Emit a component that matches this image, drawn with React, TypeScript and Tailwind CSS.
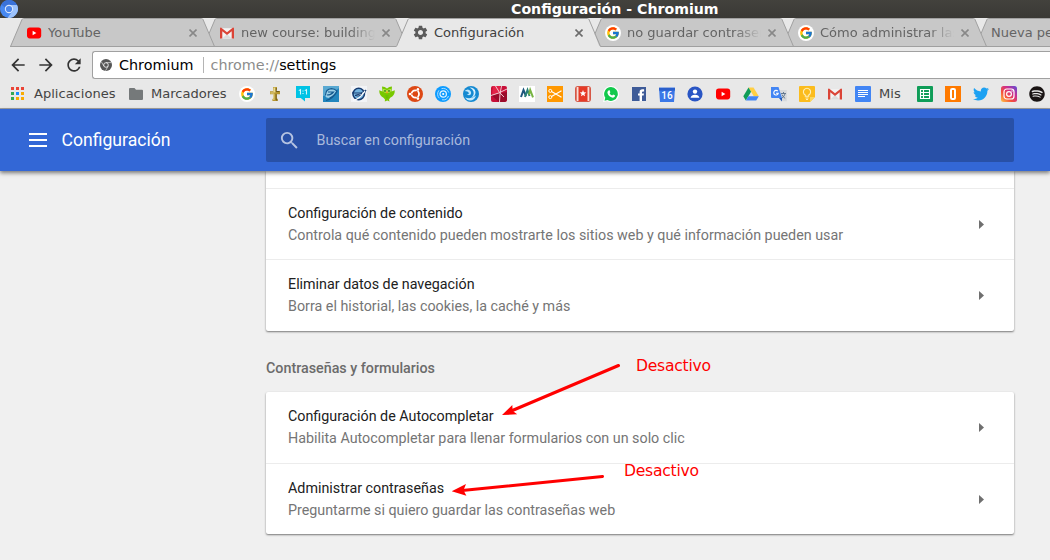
import React from "react";
import { FcGoogle } from "react-icons/fc";
import { FaTwitter, FaSpotify } from "react-icons/fa";
import { MdSettings, MdSearch, MdRefresh, MdArrowBack, MdArrowForward } from "react-icons/md";

type Children = { children: React.ReactNode };

function Glyph({ children }: Children) {
  return (
    <svg viewBox="0 0 16 16" className="block size-4 shrink-0">
      {children}
    </svg>
  );
}

function Google() {
  return (
    <span className="flex size-4 shrink-0 items-center justify-center rounded-full bg-white">
      <FcGoogle className="size-[14px]" />
    </span>
  );
}

function YouTube() {
  return (
    <Glyph>
      <rect x="1" y="2.6" width="14.2" height="10.8" rx="2.8" fill="#f00" />
      <path d="M6.6 5.8v4.4L10.4 8z" fill="#fff" />
    </Glyph>
  );
}

function Gmail() {
  return (
    <Glyph>
      <path d="M2 3.2h12v10.4H2z" fill="#f3f3f3" />
      <path d="M3.4 13.6 8 9l4.6 4.6z" fill="#dcdcdc" />
      <path d="M1 3.4v10.2h2.3V6.3L8 10l4.7-3.7v7.3H15V3.4q0-1-1-1L8 7.2 2 2.4q-1 0-1 1z" fill="#db4437" />
    </Glyph>
  );
}

function BlueBall({ className }: { className: string }) {
  return (
    <svg viewBox="0 0 18 18" className={className}>
      <circle cx="9" cy="9" r="9" fill="#4688f1" />
      <path d="M9 5h8a9 9 0 0 1-9.5 12.9L12.5 11z" fill="#9cc2fb" />
      <path d="M1.2 4.5A9 9 0 0 1 17 5H9a4 4 0 0 0-3.800 2.800z" fill="#3a72d8" />
      <circle cx="9" cy="9" r="4.2" fill="#d8e6fc" />
      <circle cx="9" cy="9" r="3.1" fill="#4c86ea" />
    </svg>
  );
}

const bookmarks: React.ReactNode[] = [
  <Google />,
  <Glyph>
    <path d="M6 1h4v2l-.7 2H13v3.300H9.800V12l1 1.300V15H5.400v-1.700l1-1.300V8.300H3V5.200h3.600L6 3z" fill="#b5952f" />
    <path d="M6.400 1.600h2V6.400h-5v1.200h4V14h-1V8" fill="#eadb91" />
    <path d="M9.200 2v3.500h3.200M9.200 8.200V14h1.300" fill="none" stroke="#5e4b13" strokeWidth=".8" />
  </Glyph>,
  <Glyph>
    <path d="M1 0h14v12H10v3.400L5.800 12H1z" fill="#00c3e5" />
    <path d="M3.800 4.600 5.500 3.600v4.800M9.800 4.600l1.700-1v4.800M8 4.600v1M8 7v1" fill="none" stroke="#d4f7fc" strokeWidth="1.100" />
  </Glyph>,
  <Glyph>
    <rect width="16" height="16" fill="#5aa9d2" />
    <path d="M0 10q8-1 16-8v14H0z" fill="#2386bd" />
    <path d="M2 8.500Q2.500 3 8.500 2.500q3.500 0 5 2l-3 5-4 2.500q-4.500 0-4.500-3.500z" fill="#9cd0e8" />
    <path d="M2.500 9.500Q2.500 3 8.500 2.600q3 0 5.500 2.400-2 4.500-7.500 7M4 9q4 0 6.500-3H5M3 14.500q7-1.500 11-9" fill="none" stroke="#145b91" strokeWidth="1.200" />
  </Glyph>,
  <Glyph>
    <rect width="16" height="16" fill="#f2f4f7" />
    <circle cx="7.700" cy="8" r="5.700" fill="#73b3df" stroke="#163b70" strokeWidth="1.600" />
    <path d="M1 7h9l5-3q-1 5-8 6l-3-.6 7-2" fill="#d8edf8" stroke="#163b70" />
    <path d="M2 14.500Q9 13 14 5" fill="none" stroke="#f8fafc" strokeWidth="1.300" />
  </Glyph>,
  <Glyph>
    <path d="M3 .5q3 .2 5 2 2-1.800 5-2l-.5 5 3.300-1.300q.2 5-4.600 7.600L10 13.500l.5 2-2.200-1-2.500 1 .2-2-1.500-1.700Q.2 9.500.2 4.200l3.300 1.300z" fill="#78c800" />
    <path d="M4 3q2.800-.3 4 1.500Q9.200 2.700 12 3q.3 3.600-2.500 3.800H6.500Q3.700 6.600 4 3z" fill="#b5ea48" />
    <circle cx="6" cy="4.900" r=".9" fill="#397b12" />
    <circle cx="10" cy="4.900" r=".9" fill="#397b12" />
    <path d="m6.800 6.100 1.200-.8 1.200.8L8 7.700z" fill="#f59b22" />
    <path d="M6.500 10h3M7 11.800h2.500" stroke="#5fae0c" strokeWidth=".8" />
  </Glyph>,
  <Glyph>
    <circle cx="8" cy="8" r="8" fill="#dd4814" />
    <circle cx="8.300" cy="8" r="3.700" fill="none" stroke="#fff" strokeWidth="1.800" />
    <path d="M8.300 8H1M8.300 8l3.500-6M8.300 8l3.500 6" stroke="#dd4814" />
    <circle cx="3" cy="8" r="1.300" fill="#fff" />
    <circle cx="10.900" cy="3.400" r="1.300" fill="#fff" />
    <circle cx="10.900" cy="12.600" r="1.300" fill="#fff" />
  </Glyph>,
  <Glyph>
    <circle cx="8" cy="8" r="8" fill="#0c9bff" />
    <path d="M4.300 12.200A5.800 5.800 0 0 1 4 4.300M6.500 2.600A5.800 5.800 0 0 1 13.700 6.500M13.500 10A5.800 5.800 0 0 1 7 13.800" fill="none" stroke="#a9dcff" />
    <circle cx="8.200" cy="8" r="3.200" fill="none" stroke="#e2f4ff" strokeWidth="1.200" />
    <circle cx="8.200" cy="8" r="1.100" fill="#fff" />
  </Glyph>,
  <Glyph>
    <circle cx="8" cy="8" r="8" fill="#1489d1" />
    <path d="M1.500 5Q5 2 7.500 5q1.500 2.500-.5 4-2.500.5-3.300-1 2.300.5 2.300-1Q5 5 1.500 5z" fill="#bfe6fb" />
    <path d="M6.500 1.500q5.500 0 6 4.500.2 4.500-4.500 6 3.500-3 2.500-6.500-.8-2.700-4-4z" fill="#d9f1ff" />
    <path d="M2 11.500q6.500 2 11-2-1.500 5-6 5-3.500-.5-5-3z" fill="#c6e9fc" />
  </Glyph>,
  <Glyph>
    <rect width="16" height="16" rx="2" fill="#c70f38" />
    <path d="M0 9 16 6v8l-2 2H8z" fill="#9a0c2b" />
    <path d="M2 0h7l1 7-9 2z" fill="#e22347" />
    <path d="M4.500 0Q8 7 13 11M0 9.500q8-2 16-6.500M10.500 0Q8.500 8 8.500 16" fill="none" stroke="#f2c9d0" />
  </Glyph>,
  <Glyph>
    <rect width="16" height="16" fill="#fff" />
    <path d="m2 11 2.500-7L7 10" fill="none" stroke="#1c557c" strokeWidth="2" />
    <path d="m6 11 2.500-7 2 6" fill="none" stroke="#287f76" strokeWidth="2" />
    <path d="m10 8.500 1.200-4.500 2.800 7.400" fill="none" stroke="#78b443" strokeWidth="2" />
  </Glyph>,
  <Glyph>
    <rect width="16" height="16" fill="#ff9800" />
    <path d="m4.500 5.500 10 5.800M4.500 10.500l10-5.800" stroke="#fff" strokeWidth="1.200" />
    <circle cx="3.300" cy="4.900" r="1.500" fill="none" stroke="#fff" />
    <circle cx="3.300" cy="11.100" r="1.500" fill="none" stroke="#fff" />
  </Glyph>,
  <Glyph>
    <rect width="16" height="16" rx="3" fill="#d65746" />
    <path d="M1.700 1h12.600v14H1.700z" fill="#f8ddd6" />
    <path d="M3.500 1h9v14h-9z" fill="#e63a27" />
    <path d="m8 4 .9 2.300 2.400.1-1.900 1.500.7 2.400L8 9l-2.100 1.300.7-2.400-1.900-1.500 2.400-.1z" fill="#fff" />
  </Glyph>,
  <Glyph>
    <path d="M8 0a8 8 0 1 1-3.800 15L0 16l1.100-4A8 8 0 0 1 8 0z" fill="#fff" />
    <path d="M8 1.100A6.900 6.900 0 1 1 4.500 14l-3 .8.800-3A6.900 6.900 0 0 1 8 1.100z" fill="#12c94c" />
    <path d="M5.500 4.400 6.400 4l1 2.200-.8 1q.8 1.600 2.600 2.400l.9-1 2.100 1q-.3 2.200-2.400 2.100-4.600-1-5.400-5-.1-1.500 1.100-2.300z" fill="#fff" />
  </Glyph>,
  <Glyph>
    <rect x="1" y="1" width="14" height="14" fill="#3e5b98" />
    <path d="M8.600 15V9.600H7V7.400h1.600V6q0-2.800 2.800-2.800h1.700v2.200H12q-1 0-1 .9v1.100h2l-.4 2.200H11V15z" fill="#fff" />
  </Glyph>,
  <span className="relative block size-4">
    <Glyph>
      <path d="M0 2h16l-1 14H1z" fill="#3b78e7" />
      <path d="M0 1.600h16v3H0z" fill="#2a5fcb" />
      <path d="M2 1h2v1H2zM12 1h2v1h-2z" fill="#8db3f5" />
    </Glyph>
    <span className="absolute inset-x-0 top-[4px] text-center font-['Roboto',sans-serif] text-[10px] leading-[11px] font-medium text-white">16</span>
  </span>,
  <Glyph>
    <circle cx="8" cy="8" r="7.600" fill="#2955c4" />
    <circle cx="8" cy="5.600" r="2.200" fill="#fff" />
    <path d="M3.600 11.800Q4.200 8.800 8 8.800t4.400 3z" fill="#fff" />
  </Glyph>,
  <YouTube />,
  <Glyph>
    <path d="M5.500 1.400h5l5.300 8.800h-5z" fill="#ffcf44" />
    <path d="m5.500 1.400 2.600 4.400-5.300 8.800L.3 10.200z" fill="#0f9d58" />
    <path d="M5.400 10.200h10.400l-2.600 4.400H2.800z" fill="#4285f4" />
  </Glyph>,
  <Glyph>
    <path d="M7 4h8.800v11.200H9.500z" fill="#d7d9dc" />
    <path d="M0 1h7.500L11 12H1q-1 0-1-1z" fill="#4285f4" />
    <path d="m8 12 3 3.500V12z" fill="#2458b5" />
    <path d="M6.800 5.200a2.300 2.300 0 1 0 .5 2H5" fill="none" stroke="#fff" strokeWidth="1.100" />
    <path d="M10 7.500h5M12.500 6v1.500M14 8q-1 3-3 4M11 8.600q1 2.400 3.200 3.800" fill="none" stroke="#5a7189" strokeWidth=".9" />
  </Glyph>,
  <Glyph>
    <path d="M1 0h14q1 0 1 1v10l-5 5H1q-1 0-1-1V1q0-1 1-1z" fill="#fbbc1d" />
    <path d="M11 11h5l-5 5z" fill="#fbd75b" />
    <path d="M6.300 10.200V9a3.600 3.600 0 1 1 3.400 0v1.200zM6.500 12h3M7 13.500h2" fill="none" stroke="#fff0b8" strokeWidth="1.100" />
  </Glyph>,
  <Gmail />,
  <Glyph>
    <rect width="16" height="16" rx="1" fill="#4285f4" />
    <path d="M3 4.500h10M3 6.500h10M3 8.500h10M3 10.500h7" stroke="#fff" />
  </Glyph>,
];

const trailing: React.ReactNode[] = [
  <Glyph>
    <rect width="16" height="16" rx="1" fill="#0f9d58" />
    <path d="M3.500 3.500h9v9h-9zM6.500 3.500v9M3.500 6.500h9M3.500 9.500h9" fill="none" stroke="#fff" strokeWidth="1.100" />
  </Glyph>,
  <Glyph>
    <rect width="16" height="16" fill="#ff7a00" />
    <rect x="6" y="3" width="4" height="10" rx="1.200" fill="none" stroke="#fff" strokeWidth="2" />
  </Glyph>,
  <FaTwitter className="size-4 text-[#1da1f2]" />,
  <Glyph>
    <defs>
      <linearGradient id="insta" x1="0" y1="1" x2="1" y2="0">
        <stop offset="0" stopColor="#ffc84a" />
        <stop offset=".35" stopColor="#f5503b" />
        <stop offset=".65" stopColor="#cb2d8f" />
        <stop offset="1" stopColor="#5851db" />
      </linearGradient>
    </defs>
    <rect width="16" height="16" rx="2.500" fill="url(#insta)" />
    <rect x="3" y="3" width="10" height="10" rx="2.800" fill="none" stroke="#fff" strokeWidth="1.200" />
    <circle cx="8" cy="8" r="2.400" fill="none" stroke="#fff" strokeWidth="1.200" />
    <circle cx="11" cy="5" r=".7" fill="#fff" />
  </Glyph>,
  <FaSpotify className="size-4 text-[#191414]" />,
];

type TabProps = { icon?: React.ReactNode; title: string; active?: boolean; fade?: boolean; z: string };

function Tab({ icon, title, active, fade, z }: TabProps) {
  return (
    <div className={`relative -mr-3 h-[29px] w-[205px] shrink-0 ${z}`}>
      <svg viewBox="0 0 205 29" className="absolute inset-0 h-full w-full overflow-visible">
        <path
          d={active ? "M0 29 2 25 11.500 1.500Q12 .5 13 .5H191.500Q192.500 .5 193 1.500L203 27.500 205 29z" : "M.5 28.500 12 1.500Q12.500 .5 13.500 .5H191.500Q192.500 .5 193 1.500L204.500 28.500z"}
          fill={active ? "#e8e8e8" : "#c8c8c8"}
        />
        <path d="M.5 28.500 12 1.500Q12.500 .5 13.500 .5H191.500Q192.500 .5 193 1.500L204.500 28.500" fill="none" stroke="#a0a0a0" />
        {!active && <path d="M0 28.500H205" stroke="#a0a0a0" />}
      </svg>
      <div className="relative flex h-[29px] items-center">
        {icon ? <span className="ml-4 flex w-4 justify-center">{icon}</span> : <span className="ml-[10px]" />}
        <span
          className={`ml-[6px] w-[134px] overflow-hidden text-[13px] leading-[18px] whitespace-nowrap ${active ? "text-[#404040]" : "text-[#646464]"} ${fade ? "[mask-image:linear-gradient(to_right,black_108px,transparent_134px)]" : ""}`}
        >
          {title}
        </span>
        <svg viewBox="0 0 8 8" className="ml-[7px] size-2">
          <path d="m.5.5 7 7M7.500.5l-7 7" stroke={active ? "#6c6c6c" : "#888"} strokeWidth="1.600" />
        </svg>
      </div>
    </div>
  );
}

type RowProps = { title: string; detail: string; height: string };

function Row({ title, detail, height }: RowProps) {
  return (
    <div className={`flex items-center pr-[30px] pl-[22px] ${height}`}>
      <div className="flex-1 pt-px pb-[2px] text-[14.310px] leading-[22px] whitespace-nowrap">
        <div className="text-[#212121]">{title}</div>
        <div className="text-[#757575]">{detail}</div>
      </div>
      <svg viewBox="0 0 5 9" className="h-[9px] w-[5px]">
        <path d="M0 0 5 4.500 0 9z" fill="#6f6f6f" />
      </svg>
    </div>
  );
}

export default function App() {
  return (
    <div className="relative flex h-[560px] w-[1050px] flex-col overflow-hidden bg-[#f0f0f0] font-['DejaVu_Sans',sans-serif]">
      <header className="flex h-[18px] shrink-0 items-center bg-linear-to-b from-[#43423d] to-[#3a3935]">
        <BlueBall className="size-[18px]" />
        <h1 className="ml-[493px] text-[14.150px] leading-[18px] font-bold whitespace-nowrap text-white">Configuración - Chromium</h1>
      </header>

      <nav className="flex h-[29px] shrink-0 overflow-hidden bg-[#e8e8e8] pl-[10px]">
        <Tab z="z-20" icon={<YouTube />} title="YouTube" />
        <Tab z="z-10" icon={<Gmail />} title="new course: building a" fade />
        <Tab z="z-30" icon={<MdSettings className="size-[17px] shrink-0 text-[#5a5a5a]" />} title="Configuración" active />
        <Tab z="z-20" icon={<Google />} title="no guardar contraseñas" fade />
        <Tab z="z-10" icon={<Google />} title="Cómo administrar las c" fade />
        <Tab z="z-0" title="Nueva pestaña" />
      </nav>

      <div className="flex h-8 shrink-0 items-center bg-[#e8e8e8] pt-1 text-[#333]">
        <div className="flex w-[92px] items-center gap-[8px] pl-2">
          <MdArrowBack className="size-5 shrink-0" />
          <MdArrowForward className="size-5 shrink-0" />
          <MdRefresh className="size-5 shrink-0" />
        </div>
        <div className="flex h-7 flex-1 items-center rounded-l-[3px] border border-r-0 border-[#a0a0a0] bg-white pl-[7px] text-[14.350px] leading-[18px] whitespace-nowrap">
          <svg viewBox="0 0 12 12" className="size-3">
            <circle cx="6" cy="6" r="6" fill="#555" />
            <circle cx="6" cy="6" r="2.300" fill="#555" stroke="#fff" strokeWidth=".8" />
            <path d="M6 3.600h5.200M3.900 7.200 1.300 2.700M8.100 7.200l-2.600 4.600" stroke="#fff" strokeWidth=".6" />
          </svg>
          <span className="ml-[7px] text-black">Chromium</span>
          <span className="ml-[9px] h-4 w-px bg-[#b4b4b4]" />
          <span className="ml-[7px] text-[#8c8c8c]">
            chrome://<span className="text-black">settings</span>
          </span>
        </div>
      </div>

      <div className="flex h-[30px] shrink-0 items-center overflow-hidden border-b border-[#a0a0a0] bg-[#e8e8e8] pl-[11px] text-[13.050px] whitespace-nowrap text-[#444]">
        <svg viewBox="0 0 13 13" className="size-[13px]">
          <path d="M0 0h3v3H0zM5 0h3v3H5zM10 0h3v3h-3z" fill="#ea4335" />
          <path d="M0 5h3v3H0zM0 10h3v3H0z" fill="#34a853" />
          <path d="M5 5h3v3H5z" fill="#1a8cff" />
          <path d="M10 5h3v3h-3zM5 10h3v3H5zM10 10h3v3h-3z" fill="#f9ab00" />
        </svg>
        <span className="ml-[10px] w-[82px]">Aplicaciones</span>
        <svg viewBox="0 0 14 12" className="ml-[13px] h-3 w-[14px]">
          <path d="M1 0h4.500L7 1.800h6q1 0 1 1V11q0 1-1 1H1q-1 0-1-1V1q0-1 1-1z" fill="#75797a" />
        </svg>
        <span className="ml-[8px] w-[88px]">Marcadores</span>
        <div className="flex gap-3">
          {bookmarks.map((icon, i) => (
            <React.Fragment key={i}>{icon}</React.Fragment>
          ))}
        </div>
        <span className="ml-[8px] w-[38px]">Mis</span>
        <div className="flex gap-3">
          {trailing.map((icon, i) => (
            <React.Fragment key={i}>{icon}</React.Fragment>
          ))}
        </div>
      </div>

      <div className="relative z-10 flex h-[62px] shrink-0 items-center bg-[#3367d6] font-['Roboto',sans-serif] shadow-[0_2px_4px_rgba(0,0,0,0.5)]">
        <svg viewBox="0 0 18 14" className="ml-[29px] h-[14px] w-[18px]">
          <path d="M0 1h18M0 7h18M0 13h18" stroke="#fff" strokeWidth="2" />
        </svg>
        <h2 className="ml-[14.500px] w-[204.500px] pb-px text-[17.600px] leading-6 text-white">Configuración</h2>
        <div className="flex h-11 w-[748px] items-center rounded-[2px] bg-[#2850a7] pl-3 text-[14.300px] text-[#a9b9dc]">
          <MdSearch className="size-[23px] text-[#b6c4e2]" />
          <span className="ml-[15.500px] pt-px">Buscar en configuración</span>
        </div>
      </div>

      <main className="ml-[266px] flex w-[748px] flex-1 flex-col font-['Roboto',sans-serif]">
        <section className="h-[160px] divide-y divide-[#ececec] rounded-b-[2px] bg-white shadow-[0_1px_2px_rgba(0,0,0,0.5)]">
          <div className="h-[18px]" />
          <Row height="h-[71px]" title="Configuración de contenido" detail="Controla qué contenido pueden mostrarte los sitios web y qué información pueden usar" />
          <Row height="h-[71px]" title="Eliminar datos de navegación" detail="Borra el historial, las cookies, la caché y más" />
        </section>
        <h3 className="mt-[26px] text-[14.300px] leading-[22px] font-medium text-[#6b6b6b]">Contraseñas y formularios</h3>
        <section className="mt-[13px] h-[142px] divide-y divide-[#ececec] rounded-[2px] bg-white shadow-[0_1px_2px_rgba(0,0,0,0.5)]">
          <Row height="h-[72px]" title="Configuración de Autocompletar" detail="Habilita Autocompletar para llenar formularios con un solo clic" />
          <Row height="h-[70px]" title="Administrar contraseñas" detail="Preguntarme si quiero guardar las contraseñas web" />
        </section>
      </main>

      <svg viewBox="0 0 1050 560" className="pointer-events-none absolute inset-0 z-20 h-full w-full">
        <path d="M618.500 365.500 510 411.500M602.500 476.500 462 490.500" stroke="#f00" strokeWidth="3" strokeLinecap="round" />
        <path d="m502 415 10.300-10 .4 6 4.500 3.300zM451.700 491.300 466 484l-2.500 6.200 2.900 5.500z" fill="#f00" />
      </svg>
      <span className="absolute top-[356px] left-[636px] z-20 text-[15.600px] leading-5 tracking-[-0.250px] text-[#f00]">Desactivo</span>
      <span className="absolute top-[461px] left-[624px] z-20 text-[15.600px] leading-5 tracking-[-0.250px] text-[#f00]">Desactivo</span>
    </div>
  );
}
